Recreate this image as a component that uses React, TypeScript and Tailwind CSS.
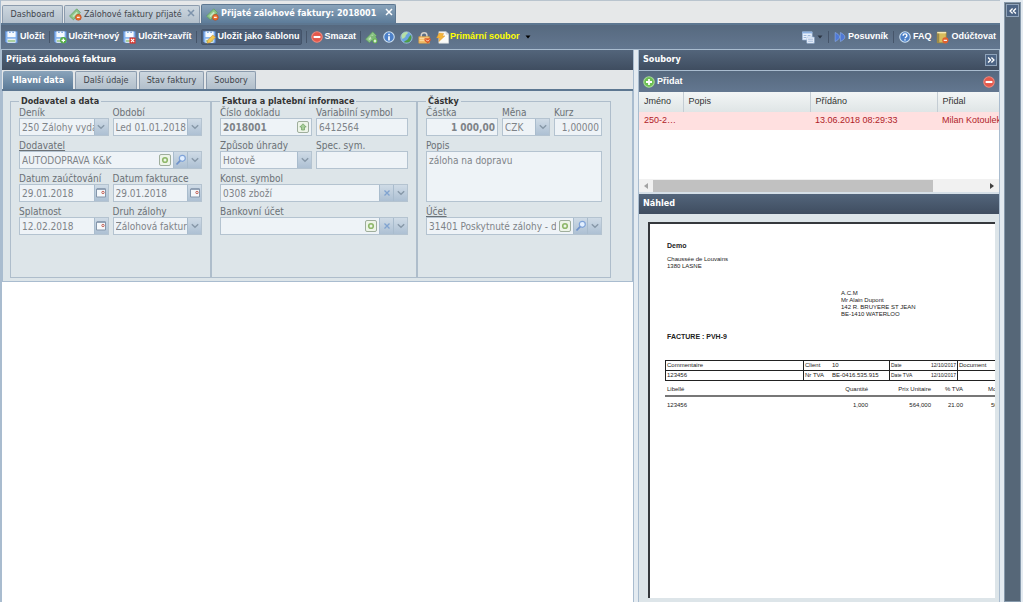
import React, { useId } from "react";

type Kids = { children?: React.ReactNode };

/* ---------- icons ---------- */

function Floppy({ children }: Kids) {
  return (
    <svg viewBox="0 0 16 16" className="size-[13px] shrink-0" aria-hidden="true">
      <path d="M.5.5h14.500v14H2L.5 13z" fill="#86b3ee" stroke="#5a8ad2" strokeWidth=".8" />
      <path d="M3 .5h10v7H3z" fill="#f6faff" />
      <path d="M5 .5h2v2H5zM9 .5h2v2H9z" fill="#7ea8e0" />
      <path d="M3 9.500h10v5H3z" fill="#eef3f8" />
      <path d="M3.500 11h9v2.500h-9z" fill="#a9cf9e" />
      {children}
    </svg>
  );
}

function Ticket({ badge }: { badge: "add" | "remove" }) {
  return (
    <svg viewBox="0 0 16 16" className="size-[13px] shrink-0" aria-hidden="true">
      <path d="M.6 10 9.500 1l4.500 4.500-8.500 9z" fill="#8cc487" stroke="#5a9c5a" strokeWidth=".8" />
      <path d="m4 9.800 5.200-5.300 1.800 1.800-5.300 5.200z" fill="#c5e5bd" />
      {badge === "remove" && (
        <g>
          <path d="M9.500 8h4.500v6.500H9.500z" fill="#b9772f" />
          <circle cx="11.500" cy="11.500" r="3.600" fill="#e8702f" stroke="#b4431c" strokeWidth=".7" />
          <path d="M9.800 11.500h3.400" stroke="#fff" strokeWidth="1.400" />
        </g>
      )}
      {badge === "add" && (
        <g>
          <path d="M6.500 6.500 12 5l3 6-5 2z" fill="#7dba76" />
          <circle cx="12.300" cy="12.300" r="3" fill="#62b44c" />
          <path d="M10.600 12.300h3.400M12.300 10.600v3.400" stroke="#fff" strokeWidth="1.300" />
        </g>
      )}
    </svg>
  );
}

function RoundIcon({ kind }: { kind: "minus" | "plus" | "info" | "help" }) {
  const fill = kind === "minus" ? "#e4574a" : kind === "plus" ? "#6cbf52" : "#4c80c8";
  return (
    <svg viewBox="0 0 16 16" className="size-3 shrink-0" aria-hidden="true">
      <circle cx="8" cy="8" r="7" fill={fill} stroke={kind === "minus" ? "#ef8a7e" : kind === "plus" ? "#a9dd98" : "#cfe2f2"} strokeWidth="1.400" />
      {kind === "minus" && <path d="M3.500 8h9" stroke="#fff" strokeWidth="2.800" />}
      {kind === "plus" && <path d="M4 8h8M8 4v8" stroke="#fff" strokeWidth="2.400" />}
      {kind === "info" && <path d="M8 3.500v2M8 7v5.500" stroke="#fff" strokeWidth="2.200" />}
      {kind === "help" && (
        <path d="M5.500 6.200c0-3.200 5-3.200 5 0 0 1.800-2.400 1.700-2.400 3.600M8 11v1.800" fill="none" stroke="#fff" strokeWidth="1.800" />
      )}
    </svg>
  );
}

function Globe() {
  return (
    <svg viewBox="0 0 16 16" className="size-[13px] shrink-0" aria-hidden="true">
      <circle cx="8" cy="8" r="7" fill="#6aa4e0" stroke="#b9d3ea" strokeWidth=".8" />
      <path d="M2 5c2-4 6-4.500 8-3-1 2-3 2-3 4S4 8 3.500 10C2 9 1.500 7 2 5z" fill="#b6dfa6" />
      <path d="M13.500 5c1.500 3 .5 6.500-2 8.500-3 1.500-6 .5-6.500 0 1-2 4-2 5-4s1.500-3 3.500-4.500z" fill="#4f9b45" />
    </svg>
  );
}

function Lock() {
  return (
    <svg viewBox="0 0 16 16" className="size-[13px] shrink-0" aria-hidden="true">
      <path d="M4 8V5.500c0-4.500 7-4.500 7 0V8" fill="none" stroke="#d6d3cc" strokeWidth="1.800" />
      <path d="M1 7h13v8H1z" fill="#f3bd69" stroke="#d69a42" strokeWidth=".8" />
      <path d="M2 9h11M2 11.500h11" stroke="#fde6b4" strokeWidth="1" />
      <path d="M8 9h7.500v3L12 15.500 8 12z" fill="#dc5a26" />
      <path d="m9.800 10.500 2 2 2-2" fill="none" stroke="#fff" />
    </svg>
  );
}

function PageBolt() {
  return (
    <svg viewBox="0 0 16 16" className="size-[13px] shrink-0" aria-hidden="true">
      <path d="M3.500.8h9l3 3V15h-12z" fill="#fbfbf8" stroke="#d4d8dc" strokeWidth=".8" />
      <path d="M12.500.8v3h3" fill="none" stroke="#b4bac2" strokeWidth=".8" />
      <path d="M4 2.500 9.500 3 8 6h3l-7.500 7 1-4.500H.8z" fill="#f5b53a" stroke="#e09a2c" strokeWidth=".6" />
    </svg>
  );
}

function FormWindows() {
  return (
    <svg viewBox="0 0 16 16" className="size-[13px] shrink-0" aria-hidden="true">
      <path d="M.5 1h12v10H.5z" fill="#e9f1fb" stroke="#9dbbe0" strokeWidth=".8" />
      <path d="M.5 1h12v2H.5z" fill="#8db2e2" />
      <path d="M2 5.500h3.500M7 5.500h3.500M2 8h3" stroke="#8aa9d2" />
      <path d="M6 7.500h9v7.500H6z" fill="#f7faff" stroke="#9dbbe0" strokeWidth=".8" />
      <path d="M7.500 10h6M7.500 12.500h6" stroke="#7f9fce" />
    </svg>
  );
}

function FastForward() {
  return (
    <svg viewBox="0 0 16 16" className="size-3 shrink-0" aria-hidden="true">
      <path d="M1.500 2v12c3-1.500 6-3.500 6-6s-3-4.500-6-6zM8.500 2v12c3-1.500 6-3.500 6-6s-3-4.500-6-6z" fill="#4f79d6" stroke="#8fb0ee" strokeWidth=".8" />
    </svg>
  );
}

function Book() {
  return (
    <svg viewBox="0 0 16 16" className="size-[13px] shrink-0" aria-hidden="true">
      <path d="M1.500 1.500h11v13h-11z" fill="#d8bc5c" stroke="#a6852f" strokeWidth=".8" />
      <path d="M1.500 1.500H4v13H1.500z" fill="#9a8a4a" />
      <path d="M1.500 2h11" stroke="#f6e9b4" strokeWidth="1.800" />
      <circle cx="11.500" cy="11.500" r="3.800" fill="#e2602f" />
      <path d="M9.500 11.500h4" stroke="#fff" strokeWidth="1.400" />
    </svg>
  );
}

function Chevrons({ dir }: { dir: "left" | "right" }) {
  return (
    <svg viewBox="0 0 12 12" className="size-2.5" aria-hidden="true">
      <path
        d={dir === "left" ? "M5.500 3 2.500 6l3 3M9.500 3l-3 3 3 3" : "M2.500 3l3 3-3 3M6.500 3l3 3-3 3"}
        fill="none"
        stroke="#fff"
        strokeWidth="1.600"
      />
    </svg>
  );
}

function Close({ color }: { color: string }) {
  return (
    <svg viewBox="0 0 8 8" className="size-2" aria-hidden="true">
      <path d="m1 1 6 6m0-6-6 6" stroke={color} strokeWidth="1.500" />
    </svg>
  );
}

function Caret({ className }: { className: string }) {
  return (
    <svg viewBox="0 0 6 4" className={className} aria-hidden="true">
      <path d="M.5.5h5L3 3.500z" fill="currentColor" />
    </svg>
  );
}

/* ---------- toolbar ---------- */

function ToolButton({ icon, label, text, className = "" }: { icon: React.ReactNode; label: string; text?: string; className?: string }) {
  return (
    <button type="button" aria-label={label} className={`flex h-4 shrink-0 items-center gap-0.5 whitespace-nowrap ${className}`}>
      {icon}
      {text && <span>{text}</span>}
    </button>
  );
}

function Separator() {
  return <span className="h-3 w-px shrink-0 bg-[#46556a]" />;
}

function MainToolbar() {
  return (
    <div className="flex h-[25px] items-center justify-between border-b border-[#a9bccf] bg-linear-to-b from-[#56697f] to-[#637790] px-1 font-['Liberation_Sans',sans-serif] text-[9px] font-bold text-white">
      <div className="flex items-center gap-1">
        <ToolButton icon={<Floppy />} label="Uložit" text="Uložit" />
        <Separator />
        <ToolButton
          icon={
            <Floppy>
              <circle cx="11.500" cy="11.500" r="4" fill="#55ad45" />
              <path d="M9.300 11.500h4.400M11.500 9.300v4.400" stroke="#fff" strokeWidth="1.500" />
            </Floppy>
          }
          label="Uložit+nový"
          text="Uložit+nový"
        />
        <ToolButton
          icon={
            <Floppy>
              <path d="M8 8h7.500v7.500H8z" fill="#d8372c" />
              <path d="m9.800 9.800 4 4m0-4-4 4" stroke="#fff" strokeWidth="1.400" />
            </Floppy>
          }
          label="Uložit+zavřít"
          text="Uložit+zavřít"
        />
        <Separator />
        <ToolButton
          icon={
            <Floppy>
              <path d="m5 15 1-4 6-6 3.300 2.800L9 14z" fill="#f4c650" stroke="#c8932f" strokeWidth=".7" />
            </Floppy>
          }
          label="Uložit jako šablonu"
          text="Uložit jako šablonu"
          className="rounded-xs border border-[#44546a] bg-[#4b5d75] px-px"
        />
        <Separator />
        <ToolButton icon={<RoundIcon kind="minus" />} label="Smazat" text="Smazat" />
        <Separator />
        <div className="flex items-center gap-[5px]">
          <ToolButton icon={<Ticket badge="add" />} label="Doklad" />
          <ToolButton icon={<RoundIcon kind="info" />} label="Info" />
          <ToolButton icon={<Globe />} label="Web" />
          <ToolButton icon={<Lock />} label="Zámek" />
          <button type="button" className="flex items-center gap-px whitespace-nowrap text-[#ffff00]">
            <PageBolt />
            <span>Primární soubor</span>
            <Caret className="ml-1 h-1 w-1.5 text-black" />
          </button>
        </div>
      </div>
      <div className="flex items-center gap-[5px]">
        <button type="button" aria-label="Zobrazení" className="flex items-center gap-0.5">
          <FormWindows />
          <Caret className="h-1 w-1.5 text-[#2c3644]" />
        </button>
        <Separator />
        <ToolButton icon={<FastForward />} label="Posuvník" text="Posuvník" />
        <Separator />
        <ToolButton icon={<RoundIcon kind="help" />} label="FAQ" text="FAQ" />
        <ToolButton icon={<Book />} label="Odúčtovat" text="Odúčtovat" />
      </div>
    </div>
  );
}

/* ---------- form parts ---------- */

const box = "flex h-[18px] w-full min-w-0 border border-[#b4c3d0] bg-[#eef3f7] text-[#7e8388]";
const field = "h-full min-w-0 flex-1 bg-transparent pl-[2px] outline-none";
const trigger = "flex h-full w-[14px] shrink-0 items-center justify-center border-l border-[#a9bccd] bg-linear-to-b from-[#cfdbe6] to-[#adc0d3]";

function Down() {
  return (
    <svg viewBox="0 0 8 6" className="h-1.5 w-2" aria-hidden="true">
      <path d="m.8 1.200 3.200 3 3.200-3" fill="none" stroke="#8798a8" strokeWidth="1.400" />
    </svg>
  );
}

function Mag() {
  return (
    <svg viewBox="0 0 12 12" className="size-3" aria-hidden="true">
      <circle cx="7.300" cy="4.300" r="3" fill="#e2efff" stroke="#7fa3d8" strokeWidth="1.200" />
      <path d="M5.200 6.600 1.500 10.500" stroke="#6f92cb" strokeWidth="1.800" />
    </svg>
  );
}

function Calendar() {
  return (
    <svg viewBox="0 0 12 12" className="size-3" aria-hidden="true">
      <path d="M1.500 2h9v8h-9z" fill="#f5f8fb" stroke="#8496ab" />
      <path d="M2 2h8.500" stroke="#8496ab" strokeWidth="1.400" />
      <circle cx="8" cy="5.500" r="1.200" fill="none" stroke="#c2564a" strokeWidth=".9" />
    </svg>
  );
}

function Cross() {
  return (
    <svg viewBox="0 0 8 8" className="size-2" aria-hidden="true">
      <path d="m1.500 1.500 5 5m0-5-5 5" stroke="#7fa3d0" strokeWidth="1.300" />
    </svg>
  );
}

function Badge({ kind }: { kind: "ring" | "up" }) {
  return (
    <button type="button" aria-label={kind === "ring" ? "Nový záznam" : "Načíst číslo"} className="m-0.5 flex w-3 shrink-0 items-center justify-center rounded-xs border border-[#9fae9c] bg-[#edf4e8]">
      <svg viewBox="0 0 8 8" className="size-2" aria-hidden="true">
        {kind === "ring" ? (
          <circle cx="4" cy="4" r="2.300" fill="none" stroke="#8fb86a" strokeWidth="1.600" />
        ) : (
          <path d="M4 .8 7.200 4H5.500v3h-3V4H.8z" fill="#a9cf9a" stroke="#6f9f62" strokeWidth=".7" />
        )}
      </svg>
    </button>
  );
}

function Action({ label, children }: { label: string } & Kids) {
  return (
    <button type="button" aria-label={label} className={trigger}>
      {children}
    </button>
  );
}

function Labelled({ label, id, link, className = "" }: { label: string; id: string; link?: boolean; className?: string }) {
  return (
    <label htmlFor={id} className={`block h-[11px] leading-3 whitespace-nowrap text-[#6b7176] ${link ? "underline" : ""} ${className}`}>
      {label}
    </label>
  );
}

type FieldProps = { label: string; value: string; link?: boolean; className?: string; inputClass?: string } & Kids;

function TextField({ label, value, link, className = "", inputClass = "pr-px", children }: FieldProps) {
  const id = useId();
  return (
    <div className={`min-w-0 ${className}`}>
      <Labelled label={label} id={id} link={link} />
      <div className={box}>
        <input id={id} type="text" disabled defaultValue={value} className={`${field} ${inputClass}`} />
        {children}
      </div>
    </div>
  );
}

function SelectField({ label, value, className = "" }: FieldProps) {
  const id = useId();
  return (
    <div className={`min-w-0 ${className}`}>
      <Labelled label={label} id={id} />
      <div className={`${box} relative`}>
        <select id={id} disabled className={`${field} mr-[14px] appearance-none overflow-hidden text-clip opacity-100`}>
          <option>{value}</option>
        </select>
        <span className="pointer-events-none absolute inset-y-0 right-0">
          <span className={trigger}>
            <Down />
          </span>
        </span>
      </div>
    </div>
  );
}

function Group({ title, className, children }: { title: string; className: string } & Kids) {
  return (
    <fieldset className={`min-w-0 shrink-0 border border-[#aebdcb] px-2 pb-[42px] ${className}`}>
      <legend className="h-3 px-0.5 text-[9px] leading-3 font-bold whitespace-nowrap text-[#333]">{title}</legend>
      <div className="flex flex-col gap-1">{children}</div>
    </fieldset>
  );
}

function InvoiceForm() {
  return (
    <form className="flex border-x border-b border-[#a9bccf] bg-[#dde5e9] px-[7px] pt-1 pb-[3px] text-[10px]">
      <Group title="Dodavatel a data" className="w-[201px]">
        <div className="flex gap-1">
          <SelectField label="Deník" value="250 Zálohy vydané" className="flex-1" />
          <SelectField label="Období" value="Led 01.01.2018" className="flex-1" />
        </div>
        <TextField label="Dodavatel" link value="AUTODOPRAVA K&K">
          <Badge kind="ring" />
          <Action label="Hledat"><Mag /></Action>
          <Action label="Rozbalit"><Down /></Action>
        </TextField>
        <div className="flex gap-1">
          <TextField label="Datum zaúčtování" value="29.01.2018" className="flex-1">
            <Action label="Kalendář"><Calendar /></Action>
          </TextField>
          <TextField label="Datum fakturace" value="29.01.2018" className="flex-1">
            <Action label="Kalendář"><Calendar /></Action>
          </TextField>
        </div>
        <div className="flex gap-1">
          <TextField label="Splatnost" value="12.02.2018" className="flex-1">
            <Action label="Kalendář"><Calendar /></Action>
          </TextField>
          <SelectField label="Druh zálohy" value="Zálohová faktura" className="flex-1" />
        </div>
      </Group>
      <Group title="Faktura a platební informace" className="w-[206px]">
        <div className="flex gap-1">
          <TextField label="Číslo dokladu" value="2018001" className="flex-1" inputClass="font-bold">
            <Badge kind="up" />
          </TextField>
          <TextField label="Variabilní symbol" value="6412564" className="flex-1" />
        </div>
        <div className="flex gap-1">
          <SelectField label="Způsob úhrady" value="Hotově" className="flex-1" />
          <TextField label="Spec. sym." value="" className="flex-1" />
        </div>
        <TextField label="Konst. symbol" value="0308 zboží">
          <Action label="Vymazat"><Cross /></Action>
          <Action label="Rozbalit"><Down /></Action>
        </TextField>
        <TextField label="Bankovní účet" value="">
          <Badge kind="ring" />
          <Action label="Vymazat"><Cross /></Action>
          <Action label="Rozbalit"><Down /></Action>
        </TextField>
      </Group>
      <Group title="Částky" className="w-[194px]">
        <div className="flex gap-1">
          <TextField label="Částka" value="1 000,00" className="w-[72px]" inputClass="pr-0.5 text-right font-bold" />
          <SelectField label="Měna" value="CZK" className="flex-1" />
          <TextField label="Kurz" value="1,00000" className="flex-1" inputClass="pr-0.5 text-right" />
        </div>
        <div>
          <Labelled label="Popis" id="popis" />
          <textarea
            id="popis"
            disabled
            defaultValue="záloha na dopravu"
            className="block h-[51px] w-full resize-none border border-[#b4c3d0] bg-[#eef3f7] px-[2px] py-px leading-4 text-[#7e8388]"
          />
        </div>
        <TextField label="Účet" link value="31401 Poskytnuté zálohy - dlouhodobé">
          <Badge kind="ring" />
          <Action label="Hledat"><Mag /></Action>
          <Action label="Rozbalit"><Down /></Action>
        </TextField>
      </Group>
    </form>
  );
}

/* ---------- panels ---------- */

const bar = "flex h-5 shrink-0 items-center justify-between bg-linear-to-b from-[#53657b] to-[#3f4d60] pl-1 pr-0.5 text-[9px] font-bold text-white";

function LeftPanel() {
  const idle = "h-[18px] rounded-t-xs border border-b-0 border-[#8c9cae] bg-linear-to-b from-[#cdd7df] to-[#b2bfcb] text-[#3f454c]";
  return (
    <section className="flex min-w-0 flex-1 flex-col border-x border-[#a9bccf]">
      <h1 className={bar}>Přijatá zálohová faktura</h1>
      <div role="tablist" className="flex h-[21px] shrink-0 items-end gap-0.5 border-b-2 border-[#5d7791] bg-[#e3e6e8] px-px text-[9px]">
        <button type="button" role="tab" aria-selected="true" className="h-[18px] w-[70px] rounded-t-xs bg-linear-to-b from-[#8aa4bb] to-[#5d7c99] pt-0.5 font-bold text-white">
          Hlavní data
        </button>
        <button type="button" role="tab" aria-selected="false" className={`${idle} w-[62px]`}>Další údaje</button>
        <button type="button" role="tab" aria-selected="false" className={`${idle} w-[65px]`}>Stav faktury</button>
        <button type="button" role="tab" aria-selected="false" className={`${idle} w-[50px]`}>Soubory</button>
      </div>
      <InvoiceForm />
      <div className="flex-1 bg-white" />
    </section>
  );
}

function FilesPanel() {
  return (
    <section className="flex flex-col font-['Liberation_Sans',sans-serif]">
      <div className={bar}>
        <h2 className="font-['DejaVu_Sans_Condensed','Noto_Sans',sans-serif]">Soubory</h2>
        <button type="button" aria-label="Sbalit panel" className="border border-[#8fa3ba] bg-[#4c6484]">
          <Chevrons dir="right" />
        </button>
      </div>
      <div className="flex h-[22px] items-center justify-between border-t border-[#a9bccf] bg-linear-to-b from-[#56697f] to-[#637790] px-1 text-[9px] font-bold text-white">
        <button type="button" className="flex items-center gap-0.5">
          <RoundIcon kind="plus" />
          <span>Přidat</span>
        </button>
        <button type="button" aria-label="Odebrat">
          <RoundIcon kind="minus" />
        </button>
      </div>
      <div className="h-[87px] overflow-hidden bg-white">
        <table className="w-full table-fixed text-left text-[9px]">
          <thead>
            <tr className="h-5 bg-linear-to-b from-[#f3f6f6] to-[#dfe5e6] text-[#333]">
              <th className="w-11 border-r border-[#c4cdd4] pl-[5px] font-normal">Jméno</th>
              <th className="w-[127px] border-r border-[#c4cdd4] pl-[5px] font-normal">Popis</th>
              <th className="w-[127px] border-r border-[#c4cdd4] pl-[5px] font-normal">Přídáno</th>
              <th className="pl-[5px] font-normal">Přidal</th>
            </tr>
          </thead>
          <tbody>
            <tr className="h-[18px] bg-[#ffe0e0] text-[#b01c28]">
              <td className="truncate pr-1 pl-[5px]">250-2018001</td>
              <td />
              <td className="pl-[5px] whitespace-nowrap">13.06.2018 08:29:33</td>
              <td className="overflow-hidden pl-[5px] text-clip whitespace-nowrap">Milan Kotoulek</td>
            </tr>
          </tbody>
        </table>
      </div>
      <div className="flex h-[13px] items-center justify-between bg-[#f1f1f1] px-1">
        <svg viewBox="0 0 6 8" className="h-2 w-1.5" aria-hidden="true"><path d="M5 1v6L1 4z" fill="#a3a3a3" /></svg>
        <div className="ml-1 flex h-3 flex-1 pr-14"><div className="flex-1 bg-[#c1c1c1]" /></div>
        <svg viewBox="0 0 6 8" className="h-2 w-1.5" aria-hidden="true"><path d="M1 1v6l4-3z" fill="#404040" /></svg>
      </div>
    </section>
  );
}

function PreviewDocument() {
  const cell = "h-[10px] border border-[#222] px-px";
  return (
    <div className="flex-1 overflow-hidden border-t-2 border-l-2 border-[#35383c] bg-white pl-[15px] font-['Liberation_Sans',sans-serif] text-[6px] leading-[7px] text-[#222]">
      <div className="pt-[17px] pl-0.5">
        <p className="text-[7px] leading-[9px] font-bold">Demo</p>
        <p className="mt-1.5">Chaussée de Louvains</p>
        <p>1380 LASNE</p>
      </div>
      <div className="mt-5 pl-44">
        <p>A.C.M</p>
        <p>Mr Alain Dupont</p>
        <p>142 R. BRUYERE ST JEAN</p>
        <p>BE-1410 WATERLOO</p>
      </div>
      <p className="mt-3.5 pl-0.5 text-[7px] leading-[9px] font-bold">FACTURE : PVH-9</p>
      <table className="mt-[19px] w-[380px] table-fixed border-collapse whitespace-nowrap">
        <tbody>
          <tr>
            <td className={`${cell} w-[138px]`}>Commentaire</td>
            <td className={`${cell} w-[86px]`}><span className="inline-block w-[27px]">Client</span>10</td>
            <td className={`${cell} w-[68px]`}><div className="flex justify-between text-[5px]"><span>Date</span><span>12/10/2017</span></div></td>
            <td className={cell}>Document</td>
          </tr>
          <tr>
            <td className={cell}>123456</td>
            <td className={cell}><span className="inline-block w-[27px]">Nr TVA</span>BE-0416.535.915</td>
            <td className={cell}><div className="flex justify-between text-[5px]"><span>Date TVA</span><span>12/10/2017</span></div></td>
            <td className={cell} />
          </tr>
        </tbody>
      </table>
      <table className="mt-[5px] w-[380px] table-fixed whitespace-nowrap">
        <thead>
          <tr className="h-[10px] border-b-2 border-[#777] text-right align-top">
            <th className="w-[138px] pl-0.5 text-left font-normal">Libellé</th>
            <th className="w-[65px] font-normal">Quantité</th>
            <th className="w-[63px] font-normal">Prix Unitaire</th>
            <th className="w-8 font-normal">% TVA</th>
            <th className="pl-[25px] text-left font-normal">Montant</th>
          </tr>
        </thead>
        <tbody>
          <tr className="h-[17px] text-right">
            <td className="pl-0.5 text-left">123456</td>
            <td>1,000</td>
            <td>564,000</td>
            <td>21.00</td>
            <td className="pl-7 text-left">564,00</td>
          </tr>
        </tbody>
      </table>
    </div>
  );
}

function RightPanel() {
  return (
    <aside className="flex w-[362px] shrink-0 flex-col border-x border-[#a9bccf]">
      <FilesPanel />
      <section className="flex flex-1 flex-col border-t-2 border-[#d6e0e8] bg-[#dde5e9]">
        <h2 className={bar}>Náhled</h2>
        <div className="flex flex-1 pt-2 pr-1 pb-1 pl-[9px]">
          <PreviewDocument />
        </div>
      </section>
    </aside>
  );
}

function DocumentTabs() {
  const idle = "flex h-[18px] items-center rounded-t-xs border border-b-0 border-[#8c9cae] bg-linear-to-b from-[#cdd7df] to-[#b2bfcb] text-[#3f454c]";
  return (
    <nav className="flex h-[25px] items-end gap-px border-t border-b-2 border-t-[#b9c4ce] border-b-[#5d7791] bg-[#e6e8e9] px-px text-[9px] whitespace-nowrap">
      <button type="button" className={`${idle} w-[61px] justify-center`}>Dashboard</button>
      <div className={`${idle} w-[136px] gap-0.5 pl-1`}>
        <Ticket badge="remove" />
        <button type="button" className="flex-1 text-left">Zálohové faktury přijaté</button>
        <button type="button" aria-label="Zavřít záložku" className="mr-1 mb-1"><Close color="#7d93ab" /></button>
      </div>
      <div className="flex h-[19px] w-[195px] items-center gap-0.5 rounded-t-xs border border-b-0 border-[#5d7791] bg-linear-to-b from-[#8aa4bb] to-[#5d7c99] pl-1 font-bold text-white">
        <Ticket badge="remove" />
        <button type="button" className="flex-1 text-left">Přijaté zálohové faktury: 2018001</button>
        <button type="button" aria-label="Zavřít záložku" className="mr-0.5 mb-1"><Close color="#fff" /></button>
      </div>
    </nav>
  );
}

export default function App() {
  return (
    <div className="flex min-h-screen bg-[#e4ebf1] font-['DejaVu_Sans_Condensed','Noto_Sans',sans-serif] text-[10px]">
      <main className="flex min-w-0 flex-1 flex-col border-l border-[#a9bccf]">
        <DocumentTabs />
        <MainToolbar />
        <div className="flex flex-1 gap-1">
          <LeftPanel />
          <RightPanel />
        </div>
      </main>
      <aside className="mt-0.5 mr-0.5 ml-1 w-[17px] border border-[#8699ab] bg-[#566778]">
        <button type="button" aria-label="Rozbalit postranní panel" className="m-px flex size-[13px] items-center justify-center border border-[#8fa3ba] bg-[#4c6484]">
          <Chevrons dir="left" />
        </button>
      </aside>
    </div>
  );
}
